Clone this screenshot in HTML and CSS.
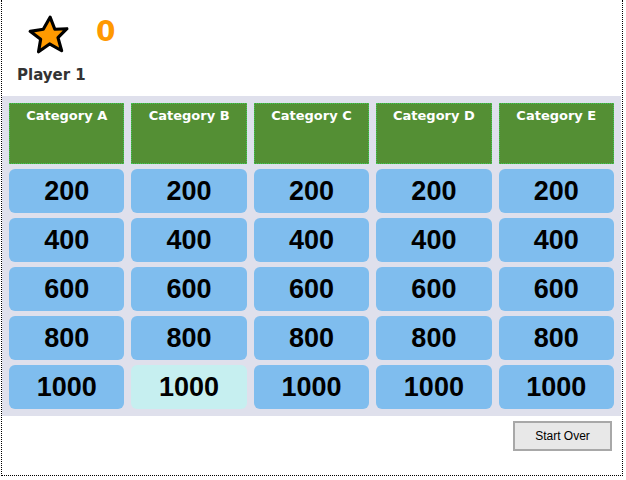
FILE: index.html
```html
<!DOCTYPE html>
<html lang="en">
<head>
    <meta charset="UTF-8">
    <title>Jeopardy</title>
    <link rel="stylesheet" href="styles.css">
</head>
<body>
    <div class="game">
        <div class="players">
            <div class="player">
                <div class="player-top">
                    <svg class="star" width="42" height="42" viewBox="0 0 40 40">
                        <path d="M22 3 L26.5 14.5 L38 14 L29.5 22.5 L33 35 L21.5 28.5 L11 36 L13 24 L3 16.5 L15.5 14.5 Z"
                              fill="#ff9a00" stroke="#000" stroke-width="3" stroke-linejoin="round"/>
                    </svg>
                    <span class="score">0</span>
                </div>
                <div class="player-name">Player 1</div>
            </div>
        </div>

        <div class="board">
            <div class="category">Category A</div>
            <div class="category">Category B</div>
            <div class="category">Category C</div>
            <div class="category">Category D</div>
            <div class="category">Category E</div>

            <div class="clue">200</div>
            <div class="clue">200</div>
            <div class="clue">200</div>
            <div class="clue">200</div>
            <div class="clue">200</div>

            <div class="clue">400</div>
            <div class="clue">400</div>
            <div class="clue">400</div>
            <div class="clue">400</div>
            <div class="clue">400</div>

            <div class="clue">600</div>
            <div class="clue">600</div>
            <div class="clue">600</div>
            <div class="clue">600</div>
            <div class="clue">600</div>

            <div class="clue">800</div>
            <div class="clue">800</div>
            <div class="clue">800</div>
            <div class="clue">800</div>
            <div class="clue">800</div>

            <div class="clue">1000</div>
            <div class="clue selected">1000</div>
            <div class="clue">1000</div>
            <div class="clue">1000</div>
            <div class="clue">1000</div>
        </div>

        <div class="footer">
            <button class="restart">Start Over</button>
        </div>
    </div>
</body>
</html>
```

FILE: styles.css
```css
body {
    margin: 0;
    background: #fff;
    font-family: "DejaVu Sans", Verdana, sans-serif;
}

.game {
    width: 622px;
    height: 476px;
    margin-left: 1px;
    border: 1px dotted #000;
    border-top: none;
    box-sizing: border-box;
}

.players {
    height: 96px;
    padding-left: 15px;
}

.player {
    display: inline-block;
}

.player-top {
    display: flex;
    align-items: flex-start;
    height: 62px;
    padding-top: 14px;
    box-sizing: border-box;
}

.star {
    margin-left: 10px;
}

.score {
    margin-left: 27px;
    margin-top: 3px;
    color: #ff9900;
    font-size: 28px;
    font-weight: bold;
    line-height: 30px;
}

.player-name {
    margin-top: 4px;
    color: #333;
    font-size: 15px;
    font-weight: bold;
}

.board {
    display: grid;
    grid-template-columns: repeat(5, 1fr);
    grid-template-rows: 61px repeat(5, 44px);
    column-gap: 7px;
    row-gap: 5px;
    padding: 7px;
    margin-right: 1px;
    background: #dfe0ec;
}

.category {
    background: #548f34;
    border: 1px dotted #3dcc55;
    color: #fff;
    font-size: 13px;
    font-weight: bold;
    text-align: center;
    padding-top: 4px;
}

.clue {
    display: flex;
    align-items: center;
    justify-content: center;
    background: #7fbdee;
    border-radius: 6px;
    font-family: "Liberation Sans", Arial, sans-serif;
    font-size: 27px;
    font-weight: bold;
    color: #000;
}

.clue.selected {
    background: #c6eff0;
}

.footer {
    display: flex;
    justify-content: flex-end;
    padding: 5px 10px 0 0;
}

.restart {
    width: 99px;
    height: 30px;
    background: #e8e8e8;
    border: 2px solid #a8a8a8;
    font-family: "Liberation Sans", Arial, sans-serif;
    font-size: 12px;
    color: #000;
}
```
